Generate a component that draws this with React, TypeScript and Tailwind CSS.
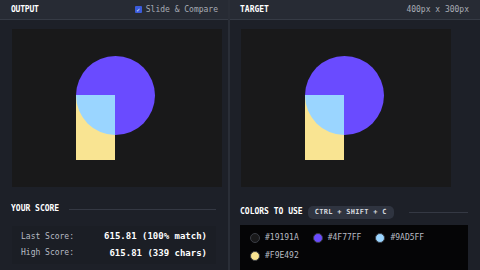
import React from "react";

const mono = { fontFamily: '"DejaVu Sans Mono", "Liberation Mono", monospace' };

function Shapes() {
  return (
    <div className="relative h-[158px] w-[210px] overflow-hidden bg-[#19191a]">
      <div className="absolute left-[64px] top-[27px] h-[79px] w-[79px] rounded-full bg-[#6a4bff]" />
      <div className="absolute left-[64px] top-[66px] h-[65px] w-[39px] overflow-hidden bg-[#f9e492]">
        <div className="absolute left-0 top-[-39px] h-[79px] w-[79px] rounded-full bg-[#9ad5ff]" />
      </div>
    </div>
  );
}

function Swatch({ color, label }: { color: string; label: string }) {
  return (
    <div className="flex items-center gap-[5px]">
      <span
        className="h-[10px] w-[10px] rounded-full border border-[#3a3d44]"
        style={{ background: color }}
      />
      <span className="text-[8px] text-[#b8bcc4]">{label}</span>
    </div>
  );
}

export default function App() {
  return (
    <div className="flex h-[270px] w-[480px] bg-[#1d2028] text-white" style={mono}>
      <div className="flex w-[228px] flex-col">
        <div className="flex h-[20px] items-center justify-between border-b border-[#363b45] bg-[#272b34] pl-[11px] pr-[10px]">
          <span className="text-[8px] font-bold tracking-tight">OUTPUT</span>
          <label className="flex items-center gap-[4px] text-[8px] text-[#a7acb5]">
            <span className="flex h-[7px] w-[7px] items-center justify-center rounded-[1px] bg-[#3b5bdb] text-[6px] leading-none text-white">
              ✓
            </span>
            Slide &amp; Compare
          </label>
        </div>
        <div className="flex pl-[12px] pt-[9px]">
          <Shapes />
        </div>
        <div className="flex items-center gap-[10px] pl-[11px] pr-[12px] pt-[16px]">
          <span className="text-[8px] font-bold">YOUR SCORE</span>
          <div className="h-px flex-1 bg-[#343843]" />
        </div>
        <div className="mx-[12px] mt-[11px] flex flex-col gap-[3px] bg-[#1b1e25] px-[9px] py-[4px] text-[8px]">
          <div className="flex items-center justify-between">
            <span className="text-[#b8bcc4]">Last Score:</span>
            <span className="text-[9px] font-bold">615.81 (100% match)</span>
          </div>
          <div className="flex items-center justify-between">
            <span className="text-[#b8bcc4]">High Score:</span>
            <span className="text-[9px] font-bold">615.81 (339 chars)</span>
          </div>
        </div>
      </div>
      <div className="w-[2px] bg-[#2a2e37]" />
      <div className="flex flex-1 flex-col">
        <div className="flex h-[20px] items-center justify-between border-b border-[#363b45] bg-[#272b34] pl-[10px] pr-[11px]">
          <span className="text-[8px] font-bold">TARGET</span>
          <span className="text-[8px] text-[#a7acb5]">400px x 300px</span>
        </div>
        <div className="flex pl-[11px] pt-[9px]">
          <Shapes />
        </div>
        <div className="flex items-center gap-[5px] pl-[10px] pr-[12px] pt-[19px]">
          <span className="text-[8px] font-bold">COLORS TO USE</span>
          <span className="rounded-[5px] bg-[#2f3440] px-[7px] py-[1px] text-[7px] font-bold tracking-[0.3px] text-[#d5d8de]">
            CTRL + SHIFT + C
          </span>
          <div className="ml-[10px] h-px flex-1 bg-[#343843]" />
        </div>
        <div className="ml-[10px] mr-[12px] mt-[6px] flex flex-1 flex-wrap content-start gap-x-[14px] gap-y-[6px] bg-[#050506] px-[10px] pt-[7px]">
          <Swatch color="#19191a" label="#19191A" />
          <Swatch color="#6a4bff" label="#4F77FF" />
          <Swatch color="#9ad5ff" label="#9AD5FF" />
          <Swatch color="#f9e492" label="#F9E492" />
        </div>
      </div>
    </div>
  );
}
